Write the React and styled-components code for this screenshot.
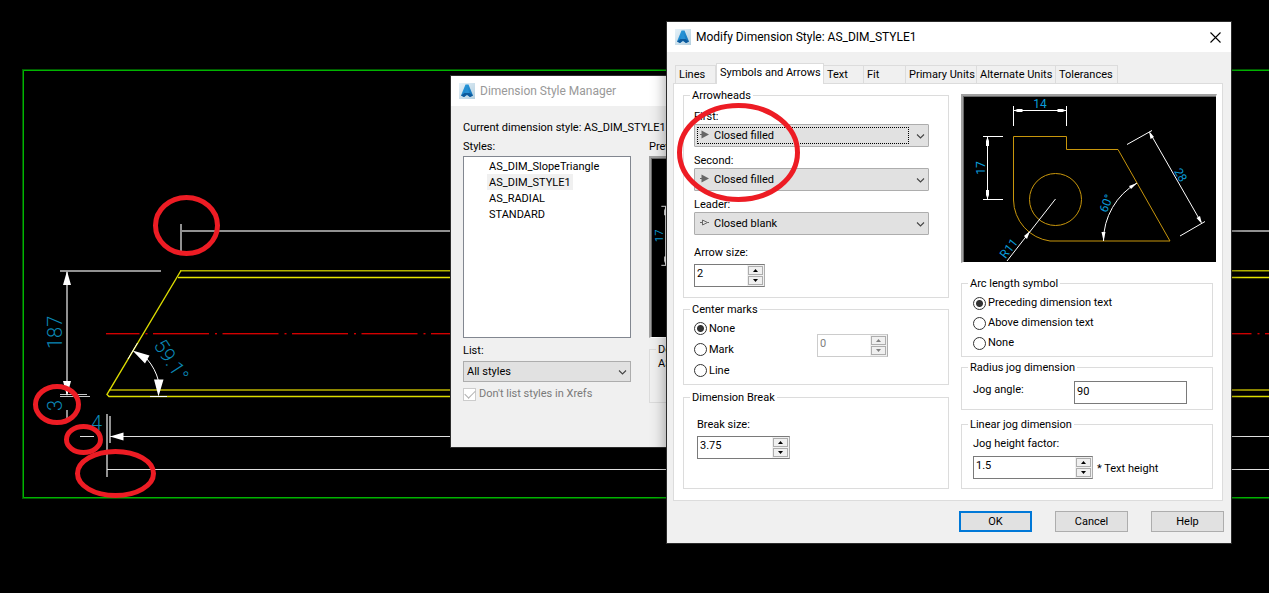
import React, { useState } from 'react';
import styled, { createGlobalStyle, css } from 'styled-components';

const TABS = [
  { name: 'Lines', width: 41 },
  { name: 'Symbols and Arrows', width: 108 },
  { name: 'Text', width: 40 },
  { name: 'Fit', width: 42 },
  { name: 'Primary Units', width: 71 },
  { name: 'Alternate Units', width: 79 },
  { name: 'Tolerances', width: 62 },
];

const STYLES = ['AS_DIM_SlopeTriangle', 'AS_DIM_STYLE1', 'AS_RADIAL', 'STANDARD'];

function Logo() {
  return (
    <svg width="16" height="16" viewBox="0 0 16 16" aria-hidden="true">
      <defs>
        <linearGradient id="tile" x1="0" y1="0" x2="1" y2="1">
          <stop offset="0" stopColor="#e6f2f9" />
          <stop offset="1" stopColor="#b4cfdf" />
        </linearGradient>
        <linearGradient id="letter" x1="0" y1="0" x2="1" y2="1">
          <stop offset="0" stopColor="#2fa3e4" />
          <stop offset="1" stopColor="#0f6cb4" />
        </linearGradient>
      </defs>
      <rect width="16" height="16" fill="url(#tile)" />
      <path d="M6.500 1.500h3L14 12.500l-3 1.500-3-2-3 2-3-1.500z" fill="url(#letter)" />
      <path d="M8 3.500l2.500 6.500h-5z" fill="#2690d4" />
      <path d="M2 12.500L5.500 10h5l3.500 2.500-3 1.500-3-2.500L5 14z" fill="#0d5a9c" />
    </svg>
  );
}

function Chevron() {
  return (
    <ChevronIcon width="9" height="5" viewBox="0 0 9 5" aria-hidden="true">
      <path d="M1 .5l3.500 3.500L8 .5" fill="none" stroke="#444" strokeWidth="1.100" />
    </ChevronIcon>
  );
}

// filled or hollow arrowhead shown in front of the option
function Arrowhead({ blank }) {
  return (
    <ArrowIcon width="10" height="9" viewBox="0 0 10 9" aria-hidden="true">
      {blank ? (
        <path d="M0 4.500h2.500M2.500 2v5l5-2.500zM7.500 4.500h1.500" fill="none" stroke="#666" />
      ) : (
        <path d="M0 4h1.500V.5L9 4.500l-7.500 4V5H0z" fill="#666" />
      )}
    </ArrowIcon>
  );
}

function ArrowSelect({ id, label, value, blank, focused }) {
  return (
    <div>
      <Label htmlFor={id}>{label}</Label>
      <SelectBox $focused={focused}>
        <Arrowhead blank={blank} />
        <Select id={id} $indent={19} defaultValue={value}>
          <option>{value}</option>
        </Select>
        <Chevron />
      </SelectBox>
    </div>
  );
}

function Spinner({ id, value, width, disabled, label }) {
  return (
    <SpinBox $width={width} $disabled={disabled}>
      <SpinInput id={id} defaultValue={value} disabled={disabled} aria-label={label} />
      <SpinButtons>
        <SpinButton type="button" disabled={disabled} aria-label="Increase">
          <svg width="5" height="3" viewBox="0 0 5 3">
            <path d="M0 3L2.500 0 5 3z" fill="currentColor" />
          </svg>
        </SpinButton>
        <SpinButton type="button" disabled={disabled} aria-label="Decrease">
          <svg width="5" height="3" viewBox="0 0 5 3">
            <path d="M0 0l2.500 3L5 0z" fill="currentColor" />
          </svg>
        </SpinButton>
      </SpinButtons>
    </SpinBox>
  );
}

function RadioList({ name, options, row }) {
  const [picked, setPicked] = useState(options[0]);

  return (
    <div>
      {options.map((option) => (
        <RadioRow key={option} $row={row}>
          <Radio
            type="radio"
            name={name}
            checked={picked === option}
            onChange={() => {
              setPicked(option);
            }}
          />
          {option}
        </RadioRow>
      ))}
    </div>
  );
}

function PartDrawing({ viewBox }) {
  return (
    <PartSvg viewBox={viewBox} preserveAspectRatio="xMinYMin slice">
      <g fill="none" stroke="#c8960c">
        <path d="M50.500 39.500h53v13h51.500l52 91.500H87A42 42 0 0 1 50.500 103z" />
        <circle cx="92.500" cy="102.500" r="26" />
      </g>
      <g fill="none" stroke="#fff">
        <path d="M50.500 9v20M103.500 9v20M50.500 13.500h53" />
        <path d="M20 39.500h20M20 102.500h20M24.500 39.500v63" />
        <path d="M164 47.500l25-14M217 139l25-14.500M187 36l51 89" />
        <path d="M140.500 144A67 67 0 0 1 174 86" />
        <path d="M92.500 102L44 164" />
      </g>
      <g fill="#fff">
        <path d="M51 13.500l3.500-1.500h5v3h-5zM103 13.500l-3.500-1.500h-5v3h5z" />
        <path d="M24.500 40l-1.500 4v5h3v-5zM24.500 102l-1.500-4v-5h3v5z" />
        <path d="M186 34l1.500 8 3.500-2zM239 127l-5.500-6 3.500-2z" />
        <path d="M174 86l-8 3 2 3zM140.500 144l-2-9h4z" />
        <path d="M67 134l-6 5 3 3z" />
      </g>
      <g fill="#0a9bd8" fontSize="12" textAnchor="middle">
        <text x="77" y="11">14</text>
        <text transform="translate(22 71) rotate(-90)">17</text>
        <text transform="translate(214 80) rotate(60)">28</text>
        <text transform="translate(147 108) rotate(-68)">60°</text>
        <text transform="translate(49 154) rotate(-52)">R11</text>
      </g>
    </PartSvg>
  );
}

function Drawing() {
  return (
    <Canvas viewBox="0 0 1269 593" preserveAspectRatio="xMinYMin slice" aria-hidden="true">
      <g fill="none">
        <path d="M1269 70H23V498h1246" stroke="#005a00" strokeWidth="2" />
        <path d="M1269 70.500H23.500V497.500h1246" stroke="#00b400" />
        <path d="M181 231h1088M181 224v27M60 271h101M67 271v124M67 410v8" stroke="#919191" strokeWidth="2" />
        <path d="M107 414v63M110 416v27" stroke="#919191" strokeWidth="2" />
        <path d="M60 394.500h27M60 396.500h30" stroke="#c8c8c8" />
        <path d="M80 436.500h14M110 436.500h1159M107 469.500h1162" stroke="#e0e0e0" strokeWidth="1.200" />
        <path d="M180 270.500h1089" stroke="#b4b400" />
        <path d="M180 271.500h1089" stroke="#5a5a00" />
        <path d="M178 277.500h1091" stroke="#e6e600" strokeWidth="1.400" />
        <path d="M109 390h1160" stroke="#8c8600" strokeWidth="2" />
        <path d="M1269 396.500H109l-2-2 74-124" stroke="#dcdc00" strokeWidth="1.400" />
        <path d="M128 359l9.500-16M150 396.500h17" stroke="#fff" />
        <g strokeDasharray="56 6 2 5.500" strokeDashoffset="22.500">
          <path d="M106 334.500h1163" stroke="#500000" />
          <path d="M106 333.500h1163" stroke="#d20000" />
        </g>
        <path d="M147 359A54 54 0 0 1 158.500 381" stroke="#fff" />
      </g>
      <g fill="#fff">
        <path d="M67 271l-4 14h8zM67 396l-4-15h8z" />
        <path d="M110 436.500l13.500-4v8z" />
        <path d="M132.500 350.500l17 5-4.500 8zM158.500 396.500l-4.500-17h9.500z" />
      </g>
      <CadText>
        <text transform="translate(62 349) rotate(-90)">187</text>
        <text transform="translate(62 411) rotate(-90)">3</text>
        <text x="91" y="430">4</text>
        <text transform="translate(153 345) rotate(57)">59.1°</text>
      </CadText>
    </Canvas>
  );
}

function Markup() {
  return (
    <Canvas viewBox="0 0 1269 593" preserveAspectRatio="xMinYMin slice" aria-hidden="true">
      <g fill="none" stroke="#ed1c24" strokeWidth="5">
        <ellipse cx="186.500" cy="225.500" rx="31" ry="28" />
        <ellipse cx="57" cy="404.500" rx="21.500" ry="18" />
        <ellipse cx="83.500" cy="439.500" rx="17" ry="13" />
        <ellipse cx="115.500" cy="473.500" rx="38" ry="22" />
        <ellipse cx="738.500" cy="152.500" rx="59" ry="47" />
      </g>
    </Canvas>
  );
}

function StyleManager() {
  return (
    <ManagerWindow>
      <TitleBar>
        <Logo />
        <Title $inactive>Dimension Style Manager</Title>
      </TitleBar>
      <ManagerBody>
        <Line>Current dimension style: AS_DIM_STYLE1</Line>
        <ManagerColumns>
          <div>
            <Line id="styles-label">Styles:</Line>
            <StyleList role="listbox" aria-labelledby="styles-label">
              {STYLES.map((name) => (
                <StyleItem
                  key={name}
                  role="option"
                  aria-selected={name === 'AS_DIM_STYLE1'}
                  $selected={name === 'AS_DIM_STYLE1'}
                >
                  {name}
                </StyleItem>
              ))}
            </StyleList>
            <ListLabel htmlFor="list">List:</ListLabel>
            <SelectBox $short>
              <Select id="list" $indent={3} defaultValue="All styles">
                <option>All styles</option>
              </Select>
              <Chevron />
            </SelectBox>
            <CheckRow>
              <CheckBox type="checkbox" defaultChecked disabled />
              Don't list styles in Xrefs
            </CheckRow>
          </div>
          <PreviewColumn>
            <Line>Preview</Line>
            <ManagerPreview>
              <PartDrawing viewBox="10 -11 270 190" />
            </ManagerPreview>
            <Description>
              <Legend>Desc</Legend>
              AS_DIM
            </Description>
          </PreviewColumn>
        </ManagerColumns>
      </ManagerBody>
    </ManagerWindow>
  );
}

function ModifyStyle() {
  const [activeTab, setActiveTab] = useState('Symbols and Arrows');

  return (
    <ModifyWindow>
      <TitleBar>
        <Logo />
        <Title>Modify Dimension Style: AS_DIM_STYLE1</Title>
        <CloseButton type="button" aria-label="Close">
          <svg width="11" height="11" viewBox="0 0 11 11">
            <path d="M.5 .5l10 10M10.500 .5l-10 10" stroke="#000" strokeWidth="1.100" />
          </svg>
        </CloseButton>
      </TitleBar>
      <TabBar role="tablist">
        {TABS.map((tab) => (
          <Tab
            key={tab.name}
            type="button"
            role="tab"
            aria-selected={activeTab === tab.name}
            $active={activeTab === tab.name}
            $width={tab.width}
            onClick={() => {
              setActiveTab(tab.name);
            }}
          >
            {tab.name}
          </Tab>
        ))}
      </TabBar>
      <Panel>
        <div>
          <Group $height={210} $top={6} $side={10} $gap={4}>
            <Legend>Arrowheads</Legend>
            <ArrowFields>
              <ArrowSelect id="first" label="First:" value="Closed filled" focused />
              <ArrowSelect id="second" label="Second:" value="Closed filled" />
              <ArrowSelect id="leader" label="Leader:" value="Closed blank" blank />
            </ArrowFields>
            <SizeField>
              <Label htmlFor="arrow-size">Arrow size:</Label>
              <Spinner id="arrow-size" value="2" width={71} />
            </SizeField>
          </Group>
          <Group $height={83} $top={2} $side={10} $gap={5}>
            <Legend>Center marks</Legend>
            <MarksRow>
              <RadioList name="marks" options={['None', 'Mark', 'Line']} row={21} />
              <Spinner value="0" width={71} disabled label="Mark size" />
            </MarksRow>
          </Group>
          <Group $height={99} $top={12} $side={13}>
            <Legend>Dimension Break</Legend>
            <SizeField>
              <Label htmlFor="break-size">Break size:</Label>
              <Spinner id="break-size" value="3.75" width={93} />
            </SizeField>
          </Group>
        </div>
        <div>
          <Preview>
            <PartDrawing viewBox="1 0 252 165" />
          </Preview>
          <Group $height={81} $top={3} $side={11} $gap={3}>
            <Legend>Arc length symbol</Legend>
            <RadioList
              name="arc"
              options={['Preceding dimension text', 'Above dimension text', 'None']}
              row={20}
            />
          </Group>
          <Group $height={50} $top={7} $side={11} $gap={7}>
            <Legend>Radius jog dimension</Legend>
            <AngleRow>
              <Label htmlFor="angle">Jog angle:</Label>
              <TextInput id="angle" defaultValue="90" />
            </AngleRow>
          </Group>
          <Group $height={72} $top={4} $side={11}>
            <Legend>Linear jog dimension</Legend>
            <Label htmlFor="factor">Jog height factor:</Label>
            <FactorRow>
              <Spinner id="factor" value="1.5" width={120} />
              <FactorUnit>* Text height</FactorUnit>
            </FactorRow>
          </Group>
        </div>
      </Panel>
      <Footer>
        <Button type="button" $primary>
          OK
        </Button>
        <Button type="button">Cancel</Button>
        <Button type="button">Help</Button>
      </Footer>
    </ModifyWindow>
  );
}

function App() {
  return (
    <Desktop>
      <GlobalStyle />
      <Drawing />
      <StyleManager />
      <ModifyStyle />
      <Markup />
    </Desktop>
  );
}

export default App;

const GlobalStyle = createGlobalStyle`
  * {
    box-sizing: border-box;
  }

  body {
    margin: 0;
    background: #000;
    color: #000;
    font: 11px/16px Roboto, Arial, sans-serif;
  }

  button,
  input,
  select {
    margin: 0;
    padding: 0;
    color: inherit;
    font: inherit;
  }
`;

const Desktop = styled.main`
  position: relative;
  width: 100%;
  min-height: 100vh;
  overflow: hidden;
  background: #000;
`;

const Canvas = styled.svg`
  position: absolute;
  inset: 0;
  width: 100%;
  height: 100%;
  pointer-events: none;
`;

const CadText = styled.g`
  fill: #0a86b4;
  font-size: 20px;
  font-weight: 300;
`;

const windowFrame = css`
  position: absolute;
  background: #f0f0f0;
`;

const ManagerWindow = styled.section`
  ${windowFrame}
  left: 451px;
  top: 76px;
  width: 252px;
  height: 371px;
  box-shadow: 0 0 0 1px #2b2b2b;
`;

const ModifyWindow = styled.section`
  ${windowFrame}
  left: 667px;
  top: 22px;
  width: 564px;
  box-shadow: 0 0 0 1px #2b2b2b, 0 3px 14px 1px rgba(0, 0, 0, 0.4);
`;

const TitleBar = styled.header`
  display: flex;
  align-items: center;
  height: 30px;
  padding: 0 10px 0 8px;
  background: #fff;
`;

const Title = styled.h1`
  flex: 1;
  margin: 0 0 0 5px;
  color: ${({ $inactive }) => ($inactive ? '#999' : '#000')};
  font-size: 12px;
  font-weight: 400;
`;

const CloseButton = styled.button`
  display: flex;
  border: 0;
  background: none;
`;

const ManagerBody = styled.div`
  padding: 13px 12px;
`;

const Line = styled.div`
  height: 16px;
  line-height: 18px;
  white-space: nowrap;
`;

const ManagerColumns = styled.div`
  display: grid;
  grid-template-columns: 168px 1fr;
  gap: 18px;
  padding-top: 3px;
`;

const PreviewColumn = styled.div`
  min-width: 0;
`;

const StyleList = styled.ul`
  height: 182px;
  margin: 2px 0 4px;
  padding: 1px 23px;
  border: 1px solid #828790;
  background: #fff;
  list-style: none;
`;

const StyleItem = styled.li`
  width: fit-content;
  height: 16px;
  padding: 0 2px;
  background: ${({ $selected }) => ($selected ? '#f0f0f0' : 'transparent')};
  line-height: 18px;
`;

const ListLabel = styled.label`
  display: block;
  height: 16px;
  margin-bottom: 3px;
  line-height: 18px;
`;

const CheckRow = styled.label`
  display: flex;
  align-items: center;
  gap: 3px;
  margin-top: 4px;
  color: #7a7a7a;
`;

const CheckBox = styled.input`
  appearance: none;
  width: 13px;
  height: 13px;
  border: 1px solid #ccc;
  background: #fff;

  &:checked::after {
    content: '';
    display: block;
    width: 9px;
    height: 5px;
    margin: 1px;
    border: solid #b0b0b0;
    border-width: 0 0 1px 1px;
    transform: rotate(-45deg);
  }
`;

const sunken = css`
  padding: 1px 0 0 1px;
  border: solid;
  border-width: 2px 1px 1px 2px;
  border-color: #a0a0a0 #fff #fff #a0a0a0;
  background: #000;
  box-shadow: inset 1px 1px #696969;
`;

const ManagerPreview = styled.div`
  ${sunken}
  height: 182px;
  margin: 2px 0 4px;
`;

const Legend = styled.legend`
  height: 14px;
  padding: 0 2px;
  line-height: 16px;
`;

const groupFrame = css`
  min-width: 0;
  margin: 0;
  border: 1px solid #dcdcdc;
`;

const Description = styled.fieldset`
  ${groupFrame}
  height: 61px;
  padding: 0 8px;

  ${Legend} {
    margin-left: -2px;
  }
`;

const TabBar = styled.div`
  position: relative;
  display: flex;
  align-items: flex-end;
  margin: 11px 0 -1px;
  padding-left: 8px;
`;

const Tab = styled.button`
  width: ${({ $width }) => $width}px;
  height: ${({ $active }) => ($active ? '21px' : '19px')};
  padding: ${({ $active }) => ($active ? '0 0 3px 3px' : '0 0 0 3px')};
  border: solid #dcdcdc;
  border-width: ${({ $active }) => ($active ? '1px 1px 0' : '1px 1px 1px 0')};
  background: ${({ $active }) => ($active ? '#fff' : '#f0f0f0')};
  text-align: left;
  white-space: nowrap;

  &:first-child {
    border-left-width: 1px;
  }
`;

const Panel = styled.div`
  display: grid;
  grid-template-columns: 266fr 252fr;
  gap: 12px;
  margin: 0 8px 0 6px;
  padding: 4px 9px 11px;
  border: 1px solid #dcdcdc;
  background: #fff;
`;

const Group = styled.fieldset`
  ${groupFrame}
  min-height: ${({ $height }) => $height}px;
  margin-bottom: ${({ $gap }) => $gap || 0}px;
  padding: ${({ $top, $side }) => `${$top}px ${$side}px 0`};

  ${Legend} {
    margin-left: ${({ $side }) => 6 - $side}px;
  }
`;

const ArrowFields = styled.div`
  display: grid;
  gap: 5px;
  margin: 0 9px 9px 0;
`;

const Label = styled.label`
  display: block;
  height: 16px;
  line-height: 18px;
`;

const SelectBox = styled.div`
  position: relative;
  height: ${({ $short }) => ($short ? '21px' : '23px')};
  border: 1px solid #adadad;
  border-radius: ${({ $short }) => ($short ? '0' : '1px')};
  background: #e1e1e1;

  ${({ $focused }) =>
    $focused &&
    css`
      &::after {
        content: '';
        position: absolute;
        inset: 2px 19px 2px 2px;
        border: 1px dotted #000;
        pointer-events: none;
      }
    `}
`;

const Select = styled.select`
  appearance: none;
  display: block;
  width: 100%;
  height: 100%;
  padding-left: ${({ $indent }) => $indent}px;
  border: 0;
  background: transparent;
`;

const ChevronIcon = styled.svg`
  position: absolute;
  top: 50%;
  right: 3px;
  margin-top: -2px;
  pointer-events: none;
`;

const ArrowIcon = styled.svg`
  position: absolute;
  top: 5px;
  left: 5px;
  pointer-events: none;
`;

const SizeField = styled.div`
  display: grid;
  gap: 4px;
`;

const SpinBox = styled.div`
  display: flex;
  width: ${({ $width }) => $width}px;
  height: 23px;
  border: 1px solid ${({ $disabled }) => ($disabled ? '#ccc' : '#7a7a7a')};
  border-right-color: #adadad;
  color: ${({ $disabled }) => ($disabled ? '#808080' : '#000')};
`;

const SpinInput = styled.input`
  flex: 1;
  min-width: 0;
  padding: 0 2px 3px;
  border: 0;
  background: #fff;
`;

const SpinButtons = styled.div`
  display: grid;
  gap: 1px;
  width: 17px;
  padding: 1px;
  background: #f0f0f0;
`;

const SpinButton = styled.button`
  display: flex;
  align-items: center;
  justify-content: center;
  border: 1px solid #adadad;
  background: #f0f0f0;
`;

const RadioRow = styled.label`
  display: flex;
  align-items: center;
  gap: 2px;
  height: ${({ $row }) => $row}px;
`;

const Radio = styled.input`
  appearance: none;
  width: 13px;
  height: 13px;
  border: 1px solid #333;
  border-radius: 50%;
  background: #fff;

  &:checked {
    background: radial-gradient(circle, #333 3px, #fff 4px);
  }
`;

const MarksRow = styled.div`
  display: grid;
  grid-template-columns: 123px auto;

  ${SpinBox} {
    align-self: center;
    margin-bottom: 8px;
  }
`;

const Preview = styled.div`
  ${sunken}
  height: 169px;
  margin: 6px -4px 13px 0;
`;

const PartSvg = styled.svg`
  display: block;
  width: 100%;
  height: 100%;
`;

const AngleRow = styled.div`
  display: grid;
  grid-template-columns: 101px 113px;
`;

const TextInput = styled.input`
  height: 23px;
  padding: 0 2px 3px;
  border: 1px solid #7a7a7a;
`;

const FactorRow = styled.div`
  display: flex;
  align-items: center;
  gap: 4px;
  margin-top: 5px;
`;

const FactorUnit = styled.span`
  padding-top: 2px;
`;

const Footer = styled.footer`
  display: flex;
  justify-content: flex-end;
  gap: 23px;
  padding: 10px 7px 11px;
`;

const Button = styled.button`
  width: 73px;
  height: 21px;
  border: ${({ $primary }) => ($primary ? '2px solid #0078d7' : '1px solid #adadad')};
  background: #e1e1e1;
`;
